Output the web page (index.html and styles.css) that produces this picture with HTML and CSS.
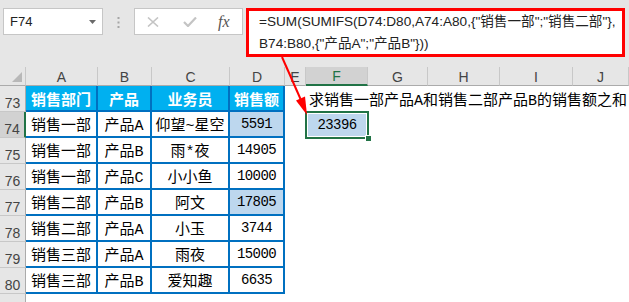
FILE: index.html
```html
<!DOCTYPE html>
<html lang="zh-CN">
<head>
    <meta charset="UTF-8">
    <meta name="viewport" content="width=device-width, initial-scale=1.0">
    <title>SUMIFS 多条件求和</title>
    <link rel="stylesheet" href="styles.css">
</head>
<body>

<div class="app">
    <div class="toolbar">
        <div class="namebox">
            <span>F74</span>
            <svg class="caret" width="7" height="4" viewBox="0 0 7 4"><path d="M0 0h7L3.5 4z" fill="#6a6a6a"/></svg>
        </div>
        <svg class="grip" width="3" height="11" viewBox="0 0 3 11">
            <rect x="0.5" y="0" width="2" height="2" fill="#a6a6a6"/>
            <rect x="0.5" y="4.5" width="2" height="2" fill="#a6a6a6"/>
            <rect x="0.5" y="9" width="2" height="2" fill="#a6a6a6"/>
        </svg>
        <div class="fbtns">
            <svg class="ico-x" width="12" height="10" viewBox="0 0 12 10"><path d="M1 0.5l10 9M11 0.5l-10 9" stroke="#c4c4c4" stroke-width="1.6" fill="none"/></svg>
            <svg class="ico-ok" width="14" height="10" viewBox="0 0 14 10"><path d="M1 5l4 4 8-8.5" stroke="#c4c4c4" stroke-width="2.2" fill="none"/></svg>
            <span class="fx">fx</span>
        </div>
        <div class="formula">
            <div>=SUM(SUMIFS(D74:D80,A74:A80,{"销售一部";"销售二部"},</div>
            <div>B74:B80,{"产品A";"产品B"}))</div>
        </div>
    </div>

    <div class="sheet">
        <div class="corner"><span class="tri"></span></div>
        <div class="ch">A</div>
        <div class="ch">B</div>
        <div class="ch">C</div>
        <div class="ch">D</div>
        <div class="ch">E</div>
        <div class="ch ch-on">F</div>
        <div class="ch">G</div>
        <div class="ch">H</div>
        <div class="ch">I</div>
        <div class="ch">J</div>

        <div class="rh">73</div>
        <div class="c t th">销售部门</div>
        <div class="c t th">产品</div>
        <div class="c t th">业务员</div>
        <div class="c t th">销售额</div>
        <div class="c"></div>
        <div class="c note">求销售一部产品A和销售二部产品B的销售额之和</div>

        <div class="rh rh-on">74</div>
        <div class="c t">销售一部</div>
        <div class="c t">产品A</div>
        <div class="c t">仰望~星空</div>
        <div class="c t num hl">5591</div>
        <div class="c"></div>
        <div class="c num sel">23396</div>
        <div class="c span4"></div>

        <div class="rh">75</div>
        <div class="c t">销售一部</div>
        <div class="c t">产品B</div>
        <div class="c t">雨*夜</div>
        <div class="c t num">14905</div>
        <div class="c span6"></div>

        <div class="rh">76</div>
        <div class="c t">销售一部</div>
        <div class="c t">产品C</div>
        <div class="c t">小小鱼</div>
        <div class="c t num">10000</div>
        <div class="c span6"></div>

        <div class="rh">77</div>
        <div class="c t">销售二部</div>
        <div class="c t">产品B</div>
        <div class="c t">阿文</div>
        <div class="c t num hl">17805</div>
        <div class="c span6"></div>

        <div class="rh">78</div>
        <div class="c t">销售二部</div>
        <div class="c t">产品A</div>
        <div class="c t">小玉</div>
        <div class="c t num">3744</div>
        <div class="c span6"></div>

        <div class="rh">79</div>
        <div class="c t">销售三部</div>
        <div class="c t">产品A</div>
        <div class="c t">雨夜</div>
        <div class="c t num">15000</div>
        <div class="c span6"></div>

        <div class="rh">80</div>
        <div class="c t">销售三部</div>
        <div class="c t">产品B</div>
        <div class="c t">爱知趣</div>
        <div class="c t num">6635</div>
        <div class="c span6"></div>

        <div class="rh"></div>
        <div class="c span10"></div>
    </div>

    <!-- annotation arrow from the formula to the result cell -->
    <svg class="arrow" width="629" height="302" viewBox="0 0 629 302">
        <line x1="282" y1="57" x2="300.5" y2="99" stroke="#ff0000" stroke-width="2"/>
        <polygon points="307,115 305,96.5 296,100.5" fill="#ff0000"/>
    </svg>
</div>

</body>
</html>
```

FILE: styles.css
```css
body {
    margin: 0;
    background: #fff;
    font-family: "Liberation Sans", "Noto Sans CJK SC", sans-serif;
    color: #000;
}
.app {
    position: relative;
    width: 629px;
    height: 302px;
    overflow: hidden;
}

/* formula bar */
.toolbar {
    display: flex;
    align-items: flex-start;
    height: 67px;
    box-sizing: border-box;
    padding: 8px 0 0 3px;
    background: #e6e6e6;
}
.namebox {
    width: 100px;
    height: 27px;
    box-sizing: border-box;
    border: 1px solid #c6c6c6;
    background: #fff;
    display: flex;
    align-items: center;
    justify-content: space-between;
    padding: 0 6px 0 6px;
    font-size: 13px;
    color: #222;
}
.grip {
    margin: 9px 0 0 14px;
}
.fbtns {
    width: 109px;
    height: 27px;
    box-sizing: border-box;
    margin-left: 14px;
    border: 1px solid #c6c6c6;
    background: #fff;
    display: flex;
    align-items: center;
    padding-left: 12px;
}
.ico-ok {
    margin-left: 24px;
}
.fx {
    margin-left: 21px;
    font-family: "Liberation Serif", serif;
    font-style: italic;
    font-size: 16px;
    color: #555;
}
.formula {
    width: 379px;
    height: 49px;
    box-sizing: border-box;
    margin-left: 3px;
    border: 3px solid #ff0000;
    background: #fff;
    padding-left: 10px;
    font-size: 13.6px;
    line-height: 22px;
    color: #222;
    white-space: nowrap;
    overflow: hidden;
}

/* worksheet grid */
.sheet {
    display: grid;
    grid-template-columns: 26px 72px 54px 78px 55px 21px 62px 60px 72px 73px 56px;
    grid-template-rows: 19px repeat(8, 26px) 20px;
}
.corner,
.ch {
    background: #e6e6e6;
    border-right: 1px solid #c8c8c8;
    border-bottom: 1px solid #ababab;
}
.corner {
    position: relative;
}
.tri {
    position: absolute;
    left: 12px;
    top: 5px;
    width: 0;
    height: 0;
    border-left: 10px solid transparent;
    border-bottom: 10px solid #b8b8b8;
}
.ch {
    display: flex;
    justify-content: center;
    align-items: flex-end;
    font-size: 14px;
    line-height: 16px;
    color: #444;
}
.ch-on {
    background: #d2d2d2;
    border-bottom: 2px solid #217346;
    color: #217346;
}
.rh {
    display: flex;
    justify-content: center;
    align-items: flex-end;
    background: #e6e6e6;
    border-right: 1px solid #ababab;
    border-bottom: 1px solid #c8c8c8;
    font-size: 14px;
    line-height: 16px;
    color: #444;
}
.rh-on {
    background: #d2d2d2;
    border-right: 2px solid #217346;
}
.c {
    display: flex;
    align-items: center;
    justify-content: center;
    font-family: "Liberation Mono", "Noto Sans CJK SC", monospace;
    font-size: 15px;
    white-space: nowrap;
}
.t {
    border-right: 2px solid #0070c0;
    border-bottom: 2px solid #0070c0;
}
.th {
    background: #00b0f0;
    color: #fff;
    font-weight: bold;
    font-family: "Noto Sans CJK SC", sans-serif;
}
.hl {
    background: #bdd7ee;
}
.num {
    font-size: 14px;
    letter-spacing: -0.6px;
}
.note {
    grid-column: span 5;
    justify-content: flex-start;
    padding-left: 3px;
}
.sel {
    position: relative;
    background: #bdd7ee;
    box-shadow: inset 0 0 0 2px #fff;
    outline: 2px solid #217346;
    outline-offset: -1px;
}
.sel::after {
    content: "";
    position: absolute;
    right: -4px;
    bottom: -4px;
    width: 5px;
    height: 5px;
    background: #217346;
    border: 1px solid #fff;
}
.span4 {
    grid-column: span 4;
}
.span6 {
    grid-column: span 6;
}
.span10 {
    grid-column: span 10;
}
.arrow {
    position: absolute;
    left: 0;
    top: 0;
    pointer-events: none;
}
```
